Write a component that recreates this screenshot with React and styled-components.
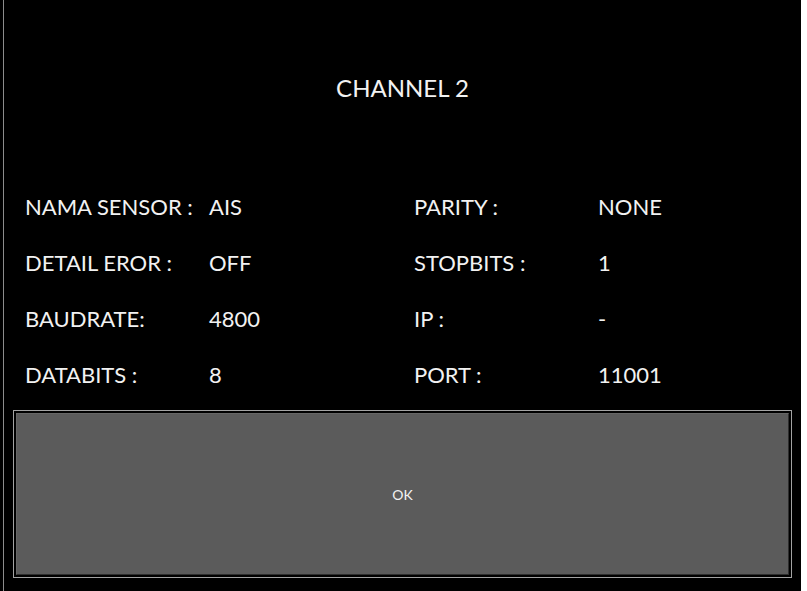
import React from 'react';
import styled, { createGlobalStyle } from 'styled-components';

const GlobalStyle = createGlobalStyle`
  html, body {
    margin: 0;
    padding: 0;
    background: #ffffff;
  }
  body {
    font-family: Lato, "Open Sans", sans-serif;
  }
`;

const Screen = styled.div`
  width: 801px;
  height: 591px;
  background: #000;
  overflow: hidden;
`;

const Panel = styled.div`
  margin-left: 3px;
  height: 100%;
  border-left: 1px solid #8c8c8c;
  display: flex;
  flex-direction: column;
  color: #f2f2f2;
`;

const Title = styled.h1`
  margin: 75px 0 0;
  font-size: 24px;
  line-height: 26px;
  font-weight: 400;
  text-align: center;
`;

const InfoGrid = styled.div`
  margin-top: 93px;
  padding-left: 21px;
  display: grid;
  grid-template-columns: 184px 205px 184px 1fr;
  row-gap: 30px;
  font-size: 22px;
  line-height: 26px;
`;

const Cell = styled.span`
  white-space: nowrap;
`;

const ButtonFrame = styled.div`
  margin: 22px 9px 0;
  height: 162px;
  border: 1px solid #a3a3a3;
  padding: 2px;
`;

const OkButton = styled.button`
  width: 100%;
  height: 100%;
  background: #5b5b5b;
  border: 1px solid;
  border-color: #666 #2e2e2e #2e2e2e #666;
  color: #f2f2f2;
  font-family: Lato, "Open Sans", sans-serif;
  font-size: 14px;
  cursor: pointer;
`;

const rows = [
  ['NAMA SENSOR :', 'AIS', 'PARITY :', 'NONE'],
  ['DETAIL EROR :', 'OFF', 'STOPBITS :', '1'],
  ['BAUDRATE:', '4800', 'IP :', '-'],
  ['DATABITS :', '8', 'PORT :', '11001'],
];

export default function App() {
  return (
    <>
      <GlobalStyle />
      <Screen>
        <Panel>
          <Title>CHANNEL 2</Title>
          <InfoGrid>
            {rows.flat().map((text, i) => (
              <Cell key={i}>{text}</Cell>
            ))}
          </InfoGrid>
          <ButtonFrame>
            <OkButton>OK</OkButton>
          </ButtonFrame>
        </Panel>
      </Screen>
    </>
  );
}
